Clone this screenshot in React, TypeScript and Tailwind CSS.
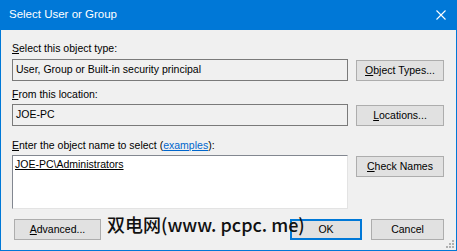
import React from 'react';

const font = { fontFamily: '"Liberation Sans", Arial, sans-serif' };

const Btn = ({ children, primary }: { children: React.ReactNode; primary?: boolean }) => (
  <div
    className={
      'flex h-[21px] items-center justify-center bg-[#e1e1e1] text-[10.5px] text-black ' +
      (primary ? 'border-2 border-[#0078d7]' : 'border border-[#adadad]')
    }
  >
    {children}
  </div>
);

const App = () => {
  return (
    <div className="relative flex h-[251px] w-[457px] flex-col border border-t-0 border-[#0078d7] bg-[#f0f0f0]" style={font}>
      {/* title bar */}
      <div className="flex h-[30px] shrink-0 items-center justify-between bg-[#0078d7] pl-[8px] pr-[10px] text-white">
        <span className="text-[11.5px]">Select User or Group</span>
        <svg width="10" height="10" viewBox="0 0 10 10">
          <path d="M0.5 0.5 L9.5 9.5 M9.5 0.5 L0.5 9.5" stroke="white" strokeWidth="1.1" />
        </svg>
      </div>

      <div className="flex flex-col pl-[11px] pr-[12px] text-[10.5px] text-black">
        <div className="mt-[10px] h-[16px] leading-[16px]">
          <span className="underline">S</span>elect this object type:
        </div>
        <div className="mt-[3px] flex gap-[8px]">
          <div className="flex h-[22px] w-[336px] items-center border border-[#7a7a7a] pl-[3px]">
            User, Group or Built-in security principal
          </div>
          <div className="mt-[1px] w-[88px]">
            <Btn>
              <span className="underline">O</span>bject Types...
            </Btn>
          </div>
        </div>

        <div className="mt-[5px] h-[16px] leading-[16px]">
          <span className="underline">F</span>rom this location:
        </div>
        <div className="mt-[2px] flex gap-[8px]">
          <div className="flex h-[22px] w-[336px] items-center border border-[#7a7a7a] pl-[3px]">JOE-PC</div>
          <div className="mt-[1px] w-[88px]">
            <Btn>
              <span className="underline">L</span>ocations...
            </Btn>
          </div>
        </div>

        <div className="mt-[11px] h-[16px] leading-[16px]">
          <span className="underline">E</span>nter the object name to select (
          <span className="text-[#0066cc] underline">examples</span>):
        </div>
        <div className="mt-[2px] flex gap-[8px]">
          <div className="h-[54px] w-[336px] border border-[#828790] border-b-[#e3e3e3] border-r-[#e3e3e3] bg-white pl-[2px] pt-[1px] leading-[14px]">
            <span className="underline">JOE-PC\Administrators</span>
          </div>
          <div className="mt-[1px] w-[88px]">
            <Btn>
              <span className="underline">C</span>heck Names
            </Btn>
          </div>
        </div>

        <div className="mt-[10px] flex">
          <div className="ml-[2px] w-[87px]">
            <Btn>
              <span className="underline">A</span>dvanced...
            </Btn>
          </div>
          <div className="ml-auto flex gap-[9px]">
            <div className="w-[72px]">
              <Btn primary>OK</Btn>
            </div>
            <div className="w-[73px]">
              <Btn>Cancel</Btn>
            </div>
          </div>
        </div>
      </div>

      {/* watermark over the dialog */}
      <div
        className="absolute left-[106px] top-[212px] text-[18px] font-medium leading-[24px] text-[#111]"
        style={{ fontFamily: '"Noto Sans CJK SC", sans-serif' }}
      >
        双电网(www. pcpc. me)
      </div>

      {/* resize grip */}
      <svg className="absolute bottom-[1px] right-[1px]" width="10" height="10" viewBox="0 0 10 10">
        <rect x="7" y="1" width="2" height="2" fill="#b0b0b0" />
        <rect x="4" y="4" width="2" height="2" fill="#b0b0b0" />
        <rect x="7" y="4" width="2" height="2" fill="#b0b0b0" />
        <rect x="1" y="7" width="2" height="2" fill="#b0b0b0" />
        <rect x="4" y="7" width="2" height="2" fill="#b0b0b0" />
        <rect x="7" y="7" width="2" height="2" fill="#b0b0b0" />
      </svg>
    </div>
  );
};

export default App;
